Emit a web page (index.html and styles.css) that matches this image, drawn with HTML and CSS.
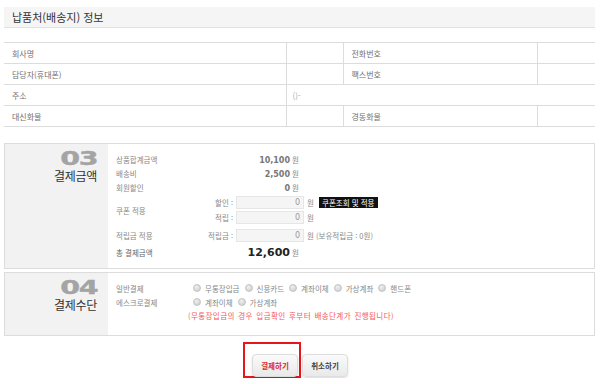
FILE: index.html
```html
<!DOCTYPE html>
<html lang="ko">
<head>
    <meta charset="UTF-8">
    <title>주문서 작성</title>
    <link rel="stylesheet" href="styles.css">
</head>
<body>
    <div class="wrap">
        <h2 class="sec-title">납품처(배송지) 정보</h2>

        <table class="info-table">
            <colgroup>
                <col style="width: 282px">
                <col style="width: 57px">
                <col style="width: 194px">
                <col>
            </colgroup>
            <tr>
                <th>회사명</th>
                <td></td>
                <th>전화번호</th>
                <td></td>
            </tr>
            <tr>
                <th>담당자(휴대폰)</th>
                <td></td>
                <th>팩스번호</th>
                <td></td>
            </tr>
            <tr>
                <th>주소</th>
                <td colspan="3" class="addr">()-</td>
            </tr>
            <tr>
                <th>대신화물</th>
                <td></td>
                <th>경동화물</th>
                <td></td>
            </tr>
        </table>

        <div class="step-box step-pay">
            <div class="step-head">
                <div class="step-num">03</div>
                <div class="step-name">결제금액</div>
            </div>
            <div class="step-body">
                <div class="amt-row">
                    <span class="lbl">상품합계금액</span>
                    <span class="amt"><b>10,100</b> 원</span>
                </div>
                <div class="amt-row">
                    <span class="lbl">배송비</span>
                    <span class="amt"><b>2,500</b> 원</span>
                </div>
                <div class="amt-row">
                    <span class="lbl">회원할인</span>
                    <span class="amt"><b>0</b> 원</span>
                </div>

                <div class="use-grid coupon">
                    <span class="lbl span2">쿠폰 적용</span>
                    <span class="sub">할인 :</span>
                    <span class="num-box">0</span>
                    <span class="after">원 <span class="btn-coupon">쿠폰조회 및 적용</span></span>
                    <span class="sub">적립 :</span>
                    <span class="num-box">0</span>
                    <span class="after">원</span>
                </div>

                <div class="use-grid point">
                    <span class="lbl">적립금 적용</span>
                    <span class="sub">적립금 :</span>
                    <span class="num-box">0</span>
                    <span class="after">원 (보유적립금 : 0원)</span>
                </div>

                <div class="amt-row total">
                    <span class="lbl">총 결제금액</span>
                    <span class="amt"><b>12,600</b> 원</span>
                </div>
            </div>
        </div>

        <div class="step-box step-method">
            <div class="step-head">
                <div class="step-num">04</div>
                <div class="step-name">결제수단</div>
            </div>
            <div class="step-body">
                <div class="method-row">
                    <span class="lbl">일반결제</span>
                    <label class="radio"><i></i>무통장입금</label>
                    <label class="radio"><i></i>신용카드</label>
                    <label class="radio"><i></i>계좌이체</label>
                    <label class="radio"><i></i>가상계좌</label>
                    <label class="radio"><i></i>핸드폰</label>
                </div>
                <div class="method-row">
                    <span class="lbl">에스크로결제</span>
                    <label class="radio"><i></i>계좌이체</label>
                    <label class="radio"><i></i>가상계좌</label>
                </div>
                <p class="notice">(무통장입금의 경우 입금확인 후부터 배송단계가 진행됩니다)</p>
            </div>
        </div>

        <div class="btn-area">
            <div class="mark">
                <a href="#" class="btn btn-pay">결제하기</a>
            </div>
            <a href="#" class="btn btn-cancel">취소하기</a>
        </div>
    </div>
</body>
</html>
```

FILE: styles.css
```css
* {
    margin: 0;
    padding: 0;
    box-sizing: border-box;
}

body {
    font-family: "Noto Sans CJK KR", "DejaVu Sans", sans-serif;
    color: #666;
    background: #fff;
    font-size: 8px;
}

.wrap {
    width: 591px;
    margin: 0 0 0 4px;
    padding-top: 7px;
}

.sec-title {
    height: 21px;
    line-height: 20px;
    padding-left: 8px;
    font-size: 11px;
    font-weight: 400;
    color: #333;
    background: #f5f5f5;
    border-bottom: 1px solid #e2e2e2;
    margin-bottom: 14px;
}

/* 배송지 정보 */
.info-table {
    width: 100%;
    border-collapse: collapse;
    table-layout: fixed;
    border-top: 1px solid #dcdcdc;
}

.info-table th,
.info-table td {
    height: 21px;
    border-bottom: 1px solid #dcdcdc;
    border-left: 1px solid #dcdcdc;
    font-weight: 400;
    text-align: left;
    padding: 0 8px;
    font-size: 8px;
    color: #707070;
}

.info-table tr > :first-child {
    border-left: 0;
}

.info-table .addr {
    padding-left: 6px;
    color: #aaa;
}

/* 단계 박스 */
.step-box {
    display: flex;
    border: 1px solid #dcdcdc;
}

.step-pay {
    margin-top: 16px;
    height: 126px;
}

.step-method {
    margin-top: 3px;
    height: 64px;
}

.step-head {
    width: 103px;
    background: #f2f2f2;
    text-align: right;
    padding: 5px 11px 0 0;
}

.step-num {
    font-family: "DejaVu Sans", sans-serif;
    font-weight: 700;
    font-size: 19px;
    line-height: 18px;
    height: 18px;
    color: #a4a4a4;
    transform: scaleX(1.5);
    transform-origin: right center;
    letter-spacing: -1px;
    -webkit-text-stroke: 0.4px #a4a4a4;
}

.step-name {
    font-family: "Liberation Sans", "Noto Sans CJK KR", sans-serif;
    font-size: 12px;
    line-height: 14px;
    color: #333;
    letter-spacing: -0.3px;
    margin-top: 3px;
}

.step-body {
    flex: 1;
    padding: 8px 0 0 8px;
}

.lbl {
    color: #888;
    font-size: 7.5px;
}

.amt-row {
    display: grid;
    grid-template-columns: 85px 98px;
    height: 14px;
    align-items: center;
}

.amt {
    text-align: right;
    font-size: 7.5px;
    color: #888;
}

.amt b {
    font-family: "DejaVu Sans", sans-serif;
    font-size: 8px;
    color: #777;
}

.amt-row.total {
    margin-top: 3px;
}

.total .lbl {
    color: #666;
}

.total .amt b {
    font-size: 11px;
    color: #222;
}

.use-grid {
    display: grid;
    grid-template-columns: 85px 29px 68px auto;
    column-gap: 3px;
    row-gap: 2px;
    align-items: center;
    margin-top: 2px;
}

.use-grid.point {
    margin-top: 5px;
}

.use-grid .span2 {
    grid-row: span 2;
}

.sub {
    text-align: right;
    font-size: 7.5px;
    color: #888;
}

.num-box {
    height: 13px;
    line-height: 12px;
    border: 1px solid #e6e6e6;
    background: #f5f5f5;
    text-align: right;
    padding-right: 3px;
    font-family: "DejaVu Sans", sans-serif;
    font-size: 8px;
    color: #999;
}

.after {
    font-size: 7.5px;
    color: #888;
}

.btn-coupon {
    display: inline-block;
    margin-left: 3px;
    padding: 0 3px;
    height: 11px;
    line-height: 11px;
    background: #111;
    color: #fff;
    font-size: 7.5px;
}

/* 결제수단 */
.method-row {
    display: flex;
    align-items: center;
    height: 14px;
}

.method-row .lbl {
    width: 77px;
}

.radio {
    display: flex;
    align-items: center;
    font-size: 7.5px;
    color: #888;
    margin-right: 5px;
}

.radio i {
    display: inline-block;
    width: 8px;
    height: 8px;
    border-radius: 50%;
    border: 1px solid #c4c4c4;
    background: radial-gradient(circle at 40% 35%, #f0f0f0, #c8c8c8);
    margin-right: 4px;
}

.notice {
    margin: 1px 0 0 72px;
    font-size: 7.5px;
    letter-spacing: 0.4px;
    word-spacing: 1px;
    color: #f25a5a;
}

/* 버튼 */
.btn-area {
    display: flex;
    justify-content: center;
    align-items: flex-end;
    margin-top: 6px;
    padding-right: 8px;
}

.mark {
    border: 2px solid #e6161b;
    padding: 10px 1px 0 7px;
    height: 36px;
}

.btn {
    display: inline-block;
    width: 46px;
    height: 23px;
    line-height: 22px;
    text-align: center;
    text-decoration: none;
    font-size: 7.5px;
    font-weight: 700;
    border: 1px solid #ddd;
    border-radius: 4px;
    background: linear-gradient(#fafafa, #e9e9e9);
    box-shadow: 0 1px 2px rgba(0, 0, 0, 0.15);
}

.btn-pay {
    color: #d42c2c;
}

.btn-cancel {
    color: #444;
    margin-left: 1px;
    margin-bottom: 1px;
}
```
